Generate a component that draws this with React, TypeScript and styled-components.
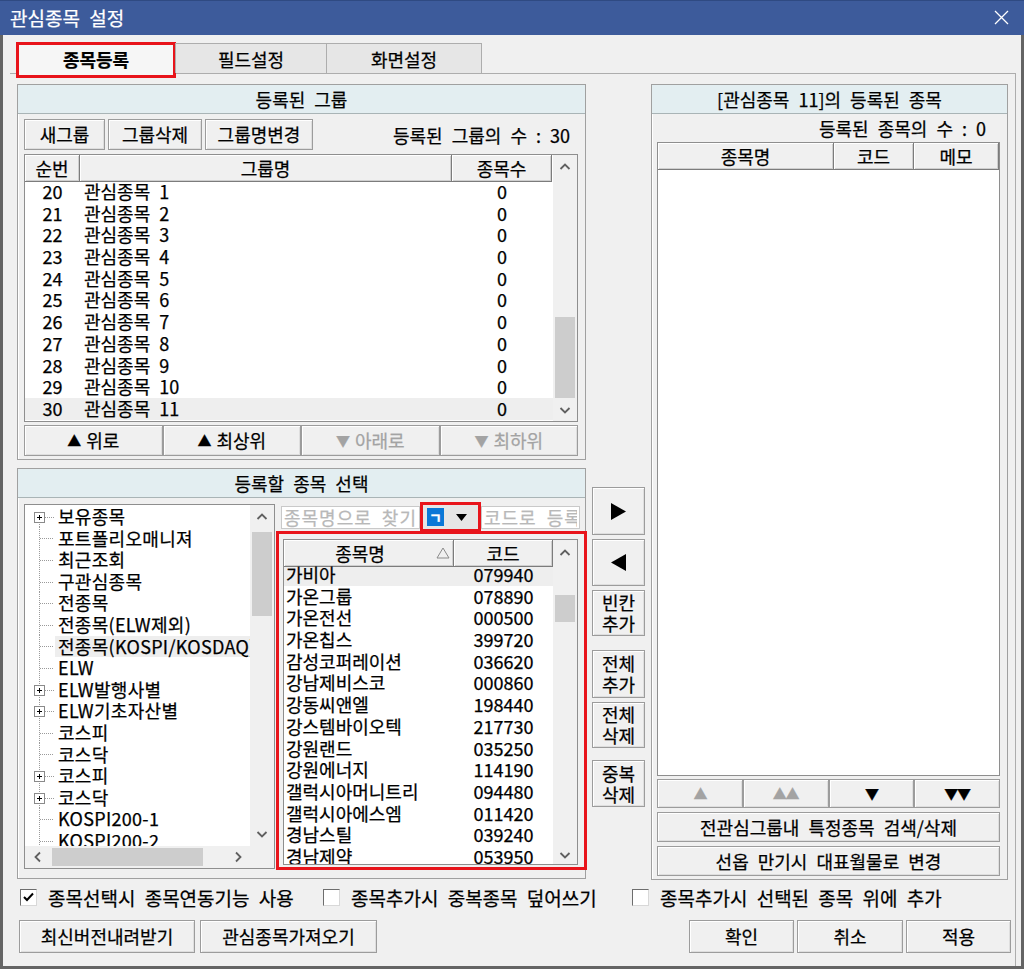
import React from 'react';
import styled, { createGlobalStyle } from 'styled-components';

const GlobalStyle = createGlobalStyle`
  * { box-sizing: border-box; }
  html, body { margin: 0; padding: 0; background: #f0f0f0; }
  body {
    font-family: "Noto Sans CJK KR", "Noto Sans", sans-serif;
    font-size: 18px;
    color: #000;
    word-spacing: 5px;
    -webkit-text-stroke: 0.25px currentColor;
  }
  button, input { font-family: inherit; font-size: inherit; word-spacing: inherit; }
`;

const ROW = 21.7;

const Window = styled.div`
  width: 1024px;
  height: 969px;
  display: flex;
  flex-direction: column;
  background: #f0f0f0;
  overflow: hidden;
`;

const TitleBar = styled.div`
  height: 35px;
  flex: none;
  display: flex;
  align-items: center;
  justify-content: space-between;
  padding: 0 15px 1px 10px;
  background: #3d5b9b;
  border-top: 1px solid #2f4a82;
  color: #fff;
  font-size: 19px;
`;

const Frame = styled.div`
  flex: 1;
  display: flex;
  flex-direction: column;
  padding: 7px 0 0 7px;
  border: 3px solid #646464;
  border-top: 0;
`;

const TabStrip = styled.div`
  height: 31px;
  flex: none;
  display: flex;
  align-items: flex-end;
  padding-left: 6px;
`;

const Tab = styled.div<{ $active?: boolean; $w: number }>`
  width: ${p => p.$w}px;
  height: ${p => (p.$active ? 36 : 30)}px;
  margin-bottom: ${p => (p.$active ? -5 : 0)}px;
  margin-left: ${p => (p.$active ? 0 : -1)}px;
  display: flex;
  align-items: center;
  justify-content: center;
  position: relative;
  z-index: 1;
  background: ${p => (p.$active ? '#f6f6f6' : '#e6e6e6')};
  border: ${p => (p.$active ? '3px solid #e8141b' : '1px solid #adadad')};
  border-bottom: ${p => (p.$active ? '3px solid #e8141b' : '0')};
  font-weight: ${p => (p.$active ? 700 : 400)};
  padding-bottom: ${p => (p.$active ? 3 : 0)}px;
`;

const TabPage = styled.div`
  flex: 1;
  width: 1006px;
  display: flex;
  flex-direction: column;
  padding: 10px 0 0 7px;
  border-top: 1px solid #adadad;
  border-right: 1px solid #adadad;
`;

const MainRow = styled.div`
  height: 796px;
  flex: none;
  display: flex;
  gap: 6px;
`;

const Column = styled.div<{ $w: number; $pt?: number; $gap?: number }>`
  width: ${p => p.$w}px;
  flex: none;
  display: flex;
  flex-direction: column;
  gap: ${p => p.$gap ?? 0}px;
  padding-top: ${p => p.$pt ?? 0}px;
`;

const Panel = styled.section<{ $w: number; $h: number }>`
  width: ${p => p.$w}px;
  height: ${p => p.$h}px;
  flex: none;
  display: flex;
  flex-direction: column;
  border: 1px solid #a0a0a0;
  box-shadow: inset 1px 1px 0 #fff;
`;

const PanelHeader = styled.div`
  height: 29px;
  flex: none;
  display: flex;
  align-items: center;
  justify-content: center;
  background: #e3eef1;
  border-bottom: 1px solid #a9b4b6;
`;

const PanelBody = styled.div<{ $pad: string; $row?: boolean }>`
  flex: 1;
  min-height: 0;
  display: flex;
  flex-direction: ${p => (p.$row ? 'row' : 'column')};
  padding: ${p => p.$pad};
`;

const Toolbar = styled.div`
  height: 31px;
  flex: none;
  display: flex;
  align-items: center;
  gap: 3px;
`;

const CountText = styled.span<{ $pr: number }>`
  margin-left: auto;
  padding-right: ${p => p.$pr}px;
  white-space: nowrap;
`;

const Btn = styled.button<{ $w?: number; $h?: number; $dim?: boolean; $mt?: number }>`
  flex: none;
  width: ${p => (p.$w ? `${p.$w}px` : '100%')};
  height: ${p => (p.$h ? `${p.$h}px` : '100%')};
  margin: ${p => p.$mt ?? 0}px 0 0 0;
  padding: 0;
  display: flex;
  align-items: center;
  justify-content: center;
  gap: 6px;
  background: #f0f0f0;
  border: 1px solid #9c9c9c;
  box-shadow: inset 1px 1px 0 #fff, inset -1px -1px 0 #dedede;
  color: ${p => (p.$dim ? '#a3a3a3' : '#000')};
  line-height: 21px;
  white-space: nowrap;
  cursor: default;
`;

const Tri = styled.span<{ $size?: number }>`
  font-size: ${p => p.$size ?? 14}px;
  letter-spacing: -1px;
`;

const BtnGrid = styled.div<{ $h: number; $mt: number }>`
  height: ${p => p.$h}px;
  margin-top: ${p => p.$mt}px;
  flex: none;
  display: grid;
  grid-template-columns: repeat(4, 1fr);
`;

/* ---------- lists ---------- */

const ListBox = styled.div<{ $w: number; $h: number; $scroll?: boolean; $mt?: number }>`
  width: ${p => p.$w}px;
  height: ${p => p.$h}px;
  margin-top: ${p => p.$mt ?? 0}px;
  flex: none;
  display: grid;
  grid-template-columns: ${p => (p.$scroll ? '1fr 24px' : '1fr')};
  border: 1px solid #8e8e8e;
  background: #fff;
  overflow: hidden;
`;

const ListBody = styled.div`
  min-width: 0;
`;

const HeadRow = styled.div<{ $cols: string; $h: number }>`
  height: ${p => p.$h}px;
  display: grid;
  grid-template-columns: ${p => p.$cols};
`;

const HeadCell = styled.div`
  display: flex;
  align-items: center;
  justify-content: center;
  background: #f0f0f0;
  border-right: 1px solid #7c7c7c;
  border-bottom: 1px solid #7c7c7c;
  box-shadow: inset 1px 1px 0 #fff, inset -1px -1px 0 #cfcfcf;
`;

const SortHeadCell = styled(HeadCell)`
  display: grid;
  grid-template-columns: 1fr auto;
  padding-right: 3px;
  text-align: center;
`;

const Row = styled.div<{ $cols: string; $sel?: boolean }>`
  height: ${ROW}px;
  display: grid;
  grid-template-columns: ${p => p.$cols};
  align-items: center;
  line-height: ${ROW}px;
  white-space: nowrap;
  background: ${p => (p.$sel ? '#eeeeee' : 'transparent')};
`;

const Cell = styled.div<{ $center?: boolean; $pl?: number }>`
  text-align: ${p => (p.$center ? 'center' : 'left')};
  padding-left: ${p => p.$pl ?? 0}px;
`;

/* ---------- scrollbars ---------- */

const VBar = styled.div`
  display: flex;
  flex-direction: column;
  background: #f0f0f0;
  min-height: 0;
`;

const HBar = styled.div`
  display: flex;
  background: #f0f0f0;
  min-width: 0;
`;

const ArrowCell = styled.div<{ $size: number; $horiz?: boolean }>`
  flex: none;
  ${p => (p.$horiz ? `width: ${p.$size}px;` : `height: ${p.$size}px;`)}
  display: flex;
  align-items: center;
  justify-content: center;
`;

const Track = styled.div<{ $offset: number; $horiz?: boolean }>`
  flex: 1;
  display: flex;
  flex-direction: ${p => (p.$horiz ? 'row' : 'column')};
  ${p => (p.$horiz ? `padding-left: ${p.$offset}px;` : `padding-top: ${p.$offset}px;`)}
`;

const Thumb = styled.div<{ $size: number; $horiz?: boolean }>`
  flex: none;
  background: #cdcdcd;
  ${p => (p.$horiz ? `width: ${p.$size}px; margin: 2px 0;` : `height: ${p.$size}px; margin: 0 2px;`)}
`;

const Corner = styled.div`
  background: #f0f0f0;
`;

const Chevron = ({ dir }: { dir: 'up' | 'down' | 'left' | 'right' }) => {
  const d = {
    up: 'M1.5 7 L6 2.5 L10.5 7',
    down: 'M1.5 3 L6 7.5 L10.5 3',
    left: 'M7 1.5 L2.5 6 L7 10.5',
    right: 'M3 1.5 L7.5 6 L3 10.5',
  }[dir];
  const horiz = dir === 'left' || dir === 'right';
  return (
    <svg width={horiz ? 10 : 12} height={horiz ? 12 : 10} viewBox={horiz ? '0 0 10 12' : '0 0 12 10'}>
      <path d={d} stroke="#606060" strokeWidth="1.8" fill="none" />
    </svg>
  );
};

const VScroll = ({ arrow, offset, size }: { arrow: number; offset: number; size: number }) => (
  <VBar>
    <ArrowCell $size={arrow}>
      <Chevron dir="up" />
    </ArrowCell>
    <Track $offset={offset}>
      <Thumb $size={size} />
    </Track>
    <ArrowCell $size={arrow}>
      <Chevron dir="down" />
    </ArrowCell>
  </VBar>
);

const HScroll = ({ arrow, offset, size }: { arrow: number; offset: number; size: number }) => (
  <HBar>
    <ArrowCell $size={arrow} $horiz>
      <Chevron dir="left" />
    </ArrowCell>
    <Track $offset={offset} $horiz>
      <Thumb $size={size} $horiz />
    </Track>
    <ArrowCell $size={arrow} $horiz>
      <Chevron dir="right" />
    </ArrowCell>
  </HBar>
);

/* ---------- tree ---------- */

const TreeBox = styled.div`
  width: 251px;
  height: 365px;
  flex: none;
  display: grid;
  grid-template-columns: 1fr 24px;
  grid-template-rows: 1fr 22px;
  border: 1px solid #8e8e8e;
  background: #fff;
`;

const TreeItems = styled.div`
  min-width: 0;
  min-height: 0;
  padding-top: 1px;
  overflow: hidden;
`;

const TreeRow = styled.div`
  height: 21.6px;
  display: flex;
  align-items: center;
  white-space: nowrap;
`;

const TreeLabel = styled.span<{ $sel?: boolean }>`
  flex: 1;
  height: 21.6px;
  line-height: 21.6px;
  padding-left: 3px;
  letter-spacing: 0.3px;
  background: ${p => (p.$sel ? '#eeeeee' : 'transparent')};
`;

const TreeConn = ({ plus, first }: { plus?: boolean; first?: boolean }) => (
  <svg width="30" height="22" viewBox="0 0 30 22" style={{ flex: 'none' }}>
    <line x1="14.5" y1={first ? 16 : 0} x2="14.5" y2="22" stroke="#9a9a9a" strokeDasharray="1 1" />
    <line x1={plus ? 20 : 15} y1="11.5" x2="29" y2="11.5" stroke="#9a9a9a" strokeDasharray="1 1" />
    {plus && (
      <g>
        <rect x="9.5" y="6.5" width="10" height="10" fill="#fff" stroke="#8a8a8a" />
        <path d="M12 11.5h5M14.5 9v5" stroke="#000" />
      </g>
    )}
  </svg>
);

const treeItems = [
  { label: '보유종목', plus: true },
  { label: '포트폴리오매니져' },
  { label: '최근조회' },
  { label: '구관심종목' },
  { label: '전종목' },
  { label: '전종목(ELW제외)' },
  { label: '전종목(KOSPI/KOSDAQ)', sel: true },
  { label: 'ELW' },
  { label: 'ELW발행사별', plus: true },
  { label: 'ELW기초자산별', plus: true },
  { label: '코스피' },
  { label: '코스닥' },
  { label: '코스피', plus: true },
  { label: '코스닥', plus: true },
  { label: 'KOSPI200-1' },
  { label: 'KOSPI200-2' },
];

/* ---------- stock search ---------- */

const StockArea = styled.div`
  width: 311px;
  flex: none;
  margin-left: 1px;
  display: flex;
  flex-direction: column;
`;

const SearchRow = styled.div`
  height: 26px;
  flex: none;
  display: flex;
  align-items: center;
`;

const SearchInput = styled.input<{ $w: number; $ml?: number }>`
  width: ${p => p.$w}px;
  height: 23px;
  margin-left: ${p => p.$ml ?? 0}px;
  padding: 0 2px;
  border: 1px solid #c9c9c9;
  background: #fff;
  outline: none;
  letter-spacing: 1px;
  &::placeholder { color: #b8b8b8; }
`;

const TypeBox = styled.div`
  width: 61px;
  height: 30px;
  flex: none;
  display: flex;
  align-items: center;
  padding-left: 4px;
  border: 3px solid #e8141b;
  background: #e6e6e6;
`;

const TypeKey = styled.span`
  width: 17px;
  height: 18px;
  display: flex;
  align-items: center;
  justify-content: center;
  background: #0a78d7;
  color: #fff;
  font-size: 14px;
  font-weight: 700;
`;

const DropArrow = styled.span`
  flex: 1;
  display: flex;
  justify-content: center;
`;

const StockFrame = styled.div`
  height: 339px;
  flex: none;
  margin-top: 1px;
  padding: 5px 6px 2px 4px;
  border: 3px solid #e8141b;
`;

const stocks = [
  ['가비아', '079940'],
  ['가온그룹', '078890'],
  ['가온전선', '000500'],
  ['가온칩스', '399720'],
  ['감성코퍼레이션', '036620'],
  ['강남제비스코', '000860'],
  ['강동씨앤엘', '198440'],
  ['강스템바이오텍', '217730'],
  ['강원랜드', '035250'],
  ['강원에너지', '114190'],
  ['갤럭시아머니트리', '094480'],
  ['갤럭시아에스엠', '011420'],
  ['경남스틸', '039240'],
  ['경남제약', '053950'],
];

/* ---------- middle / bottom ---------- */

const ArrowIcon = ({ dir }: { dir: 'left' | 'right' }) => (
  <svg width="17" height="17" viewBox="0 0 17 17">
    <polygon points={dir === 'right' ? '1,0 16,8.5 1,17' : '16,0 1,8.5 16,17'} fill="#000" />
  </svg>
);

const CheckRow = styled.div`
  height: 22px;
  flex: none;
  margin-top: 6px;
  padding-left: 3px;
  display: flex;
  align-items: center;
`;

const CheckItem = styled.label<{ $w?: number }>`
  width: ${p => (p.$w ? `${p.$w}px` : 'auto')};
  flex: none;
  display: flex;
  align-items: center;
  gap: 11px;
  font-size: 19px;
  white-space: nowrap;
`;

const CheckBox = styled.span`
  width: 17px;
  height: 17px;
  flex: none;
  display: flex;
  align-items: center;
  justify-content: center;
  background: #fff;
  border: 1px solid;
  border-color: #6d6d6d #d8d8d8 #d8d8d8 #6d6d6d;
`;

const BottomRow = styled.div`
  height: 33px;
  flex: none;
  margin-top: 12px;
  padding: 0 4px 0 2px;
  display: flex;
  justify-content: space-between;
`;

const BtnGroup = styled.div<{ $gap: number }>`
  display: flex;
  gap: ${p => p.$gap}px;
`;

const CountRow = styled.div`
  height: 28px;
  flex: none;
  display: flex;
  align-items: center;
  justify-content: flex-end;
  padding-right: 14px;
`;

const GROUP_COLS = '55px 372px 100px';
const STOCK_COLS = '170px 99px';
const RIGHT_COLS = '176px 80px 1fr';

export default function App() {
  const groups = Array.from({ length: 11 }, (_, i) => i);

  return (
    <Window>
      <GlobalStyle />
      <TitleBar>
        <span>관심종목 설정</span>
        <svg width="15" height="15" viewBox="0 0 15 15">
          <path d="M1 1L14 14M14 1L1 14" stroke="#fff" strokeWidth="1.3" />
        </svg>
      </TitleBar>
      <Frame>
        <TabStrip>
          <Tab $active $w={160}>종목등록</Tab>
          <Tab $w={152}>필드설정</Tab>
          <Tab $w={156}>화면설정</Tab>
        </TabStrip>
        <TabPage>
          <MainRow>
            <Column $w={569} $gap={8}>
              <Panel $w={569} $h={376}>
                <PanelHeader>등록된 그룹</PanelHeader>
                <PanelBody $pad="5px 7px 0 6px">
                  <Toolbar>
                    <Btn $w={81}>새그룹</Btn>
                    <Btn $w={94}>그룹삭제</Btn>
                    <Btn $w={108}>그룹명변경</Btn>
                    <CountText $pr={8}>등록된 그룹의 수 : 30</CountText>
                  </Toolbar>
                  <ListBox $w={554} $h={268} $scroll $mt={4}>
                    <ListBody>
                      <HeadRow $cols={GROUP_COLS} $h={26}>
                        <HeadCell>순번</HeadCell>
                        <HeadCell>그룹명</HeadCell>
                        <HeadCell>종목수</HeadCell>
                      </HeadRow>
                      {groups.map(i => (
                        <Row key={i} $cols={GROUP_COLS} $sel={i === 10}>
                          <Cell $center>{20 + i}</Cell>
                          <Cell $pl={4}>관심종목 {i + 1}</Cell>
                          <Cell $center>0</Cell>
                        </Row>
                      ))}
                    </ListBody>
                    <VScroll arrow={23} offset={139} size={81} />
                  </ListBox>
                  <BtnGrid $h={31} $mt={3}>
                    <Btn><Tri>▲</Tri>위로</Btn>
                    <Btn><Tri>▲</Tri>최상위</Btn>
                    <Btn $dim><Tri>▼</Tri>아래로</Btn>
                    <Btn $dim><Tri>▼</Tri>최하위</Btn>
                  </BtnGrid>
                </PanelBody>
              </Panel>

              <Panel $w={569} $h={411}>
                <PanelHeader>등록할 종목 선택</PanelHeader>
                <PanelBody $pad="6px 0 0 6px" $row>
                  <TreeBox>
                    <TreeItems>
                      {treeItems.map((t, i) => (
                        <TreeRow key={i}>
                          <TreeConn plus={t.plus} first={i === 0} />
                          <TreeLabel $sel={t.sel}>{t.label}</TreeLabel>
                        </TreeRow>
                      ))}
                    </TreeItems>
                    <VScroll arrow={24} offset={3} size={84} />
                    <HScroll arrow={25} offset={2} size={151} />
                    <Corner />
                  </TreeBox>
                  <StockArea>
                    <SearchRow>
                      <SearchInput $w={139} $ml={5} placeholder="종목명으로 찾기" />
                      <TypeBox>
                        <TypeKey>ㄱ</TypeKey>
                        <DropArrow>
                          <svg width="11" height="7" viewBox="0 0 11 7">
                            <polygon points="0,0 11,0 5.5,7" fill="#000" />
                          </svg>
                        </DropArrow>
                      </TypeBox>
                      <SearchInput $w={99} placeholder="코드로 등록" />
                    </SearchRow>
                    <StockFrame>
                      <ListBox $w={295} $h={326} $scroll>
                        <ListBody>
                          <HeadRow $cols={STOCK_COLS} $h={24}>
                            <SortHeadCell>
                              <span>종목명</span>
                              <svg width="14" height="12" viewBox="0 0 14 12">
                                <polygon points="7,1 13,11 1,11" fill="none" stroke="#8a8a8a" />
                              </svg>
                            </SortHeadCell>
                            <HeadCell>코드</HeadCell>
                          </HeadRow>
                          {stocks.map(([name, code], i) => (
                            <Row key={code} $cols={STOCK_COLS} $sel={i === 0}>
                              <Cell $pl={2}>{name}</Cell>
                              <Cell $center>{code}</Cell>
                            </Row>
                          ))}
                        </ListBody>
                        <VScroll arrow={25} offset={30} size={27} />
                      </ListBox>
                    </StockFrame>
                  </StockArea>
                </PanelBody>
              </Panel>
            </Column>

            <Column $w={53} $pt={403}>
              <Btn $h={48}><ArrowIcon dir="right" /></Btn>
              <Btn $h={47} $mt={4}><ArrowIcon dir="left" /></Btn>
              <Btn $h={46} $mt={4}>빈칸<br />추가</Btn>
              <Btn $h={48} $mt={14}>전체<br />추가</Btn>
              <Btn $h={46} $mt={4}>전체<br />삭제</Btn>
              <Btn $h={47} $mt={12}>중복<br />삭제</Btn>
            </Column>

            <Panel $w={357} $h={796}>
              <PanelHeader>[관심종목 11]의 등록된 종목</PanelHeader>
              <PanelBody $pad="0 7px 0 5px">
                <CountRow>등록된 종목의 수 : 0</CountRow>
                <ListBox $w={343} $h={634}>
                  <ListBody>
                    <HeadRow $cols={RIGHT_COLS} $h={25}>
                      <HeadCell>종목명</HeadCell>
                      <HeadCell>코드</HeadCell>
                      <HeadCell>메모</HeadCell>
                    </HeadRow>
                  </ListBody>
                </ListBox>
                <BtnGrid $h={29} $mt={3}>
                  <Btn $dim><Tri>▲</Tri></Btn>
                  <Btn $dim><Tri>▲▲</Tri></Btn>
                  <Btn><Tri>▼</Tri></Btn>
                  <Btn><Tri>▼▼</Tri></Btn>
                </BtnGrid>
                <Btn $h={30} $mt={4}>전관심그룹내 특정종목 검색/삭제</Btn>
                <Btn $h={30} $mt={4}>선옵 만기시 대표월물로 변경</Btn>
              </PanelBody>
            </Panel>
          </MainRow>

          <CheckRow>
            <CheckItem $w={303}>
              <CheckBox>
                <svg width="11" height="10" viewBox="0 0 11 10">
                  <path d="M1 5 L4 8 L10 1.5" stroke="#000" strokeWidth="2" fill="none" />
                </svg>
              </CheckBox>
              종목선택시 종목연동기능 사용
            </CheckItem>
            <CheckItem $w={309}>
              <CheckBox />
              종목추가시 중복종목 덮어쓰기
            </CheckItem>
            <CheckItem>
              <CheckBox />
              종목추가시 선택된 종목 위에 추가
            </CheckItem>
          </CheckRow>

          <BottomRow>
            <BtnGroup $gap={5}>
              <Btn $w={176}>최신버전내려받기</Btn>
              <Btn $w={177}>관심종목가져오기</Btn>
            </BtnGroup>
            <BtnGroup $gap={3}>
              <Btn $w={105}>확인</Btn>
              <Btn $w={106}>취소</Btn>
              <Btn $w={105}>적용</Btn>
            </BtnGroup>
          </BottomRow>
        </TabPage>
      </Frame>
    </Window>
  );
}
